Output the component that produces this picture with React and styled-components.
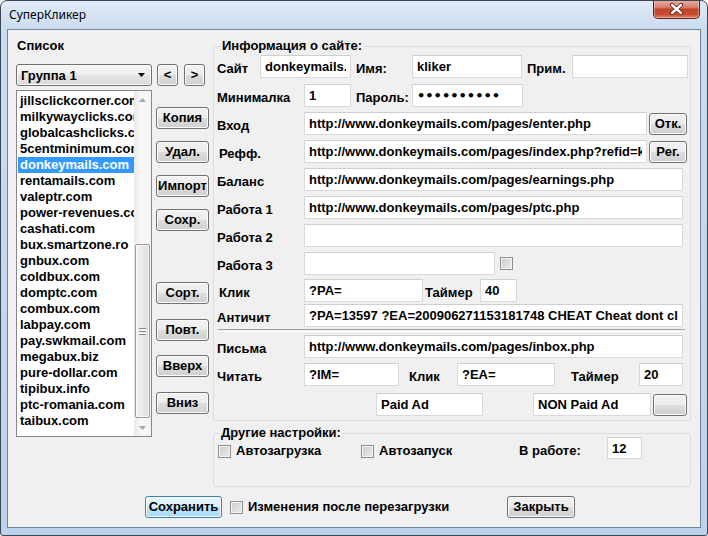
import React from 'react';
import styled, { createGlobalStyle } from 'styled-components';

// Базовые стили страницы
const GlobalStyle = createGlobalStyle`
  html, body {
    margin: 0;
    padding: 0;
    background: #ffffff;
  }
  body {
    font-family: "Liberation Sans", Arial, sans-serif;
  }
`;

const uiFont = '"Liberation Sans", Arial, sans-serif';

// Рамка окна Windows 7
const Window = styled.div`
  width: 708px;
  height: 536px;
  box-sizing: border-box;
  border: 1px solid #3c4653;
  border-radius: 7px 7px 3px 3px;
  background: linear-gradient(to bottom, #e1ebf7 0px, #cadcf0 28px, #bdd2eb 100%);
  padding: 0 6px 7px 6px;
  display: flex;
  flex-direction: column;
  overflow: hidden;
`;

const TitleBar = styled.div`
  height: 28px;
  display: flex;
  justify-content: space-between;
  align-items: flex-start;
`;

const TitleText = styled.span`
  font-family: "Noto Sans", "Open Sans", sans-serif;
  font-size: 12px;
  line-height: 16px;
  color: #000;
  padding: 6px 0 0 2px;
`;

const CloseButton = styled.div`
  width: 47px;
  height: 19px;
  margin-top: -1px;
  margin-right: 1px;
  box-sizing: border-box;
  border: 1px solid #5a2218;
  border-top: none;
  border-radius: 0 0 5px 5px;
  background: linear-gradient(to bottom, #eab1a4 0%, #d98170 40%, #c2432b 52%, #c84c33 80%, #e0866b 100%);
  display: flex;
  align-items: center;
  justify-content: center;
  box-shadow: inset 0 0 0 1px rgba(255, 255, 255, 0.35);
`;

const Client = styled.div`
  flex: 1;
  background: #f0f0f0;
  border: 1px solid #71839b;
  display: flex;
  flex-direction: column;
`;

const Top = styled.div`
  display: flex;
  height: 458px;
`;

const LeftPanel = styled.div`
  width: 193px;
  padding-left: 8px;
  display: flex;
  flex-direction: column;
`;

const SectionLabel = styled.div`
  font-family: ${uiFont};
  font-weight: bold;
  font-size: 13px;
  line-height: 16px;
  margin: 8px 0 0 1px;
  color: #000;
`;

const ComboRow = styled.div`
  display: flex;
  margin-top: 10px;
  height: 22px;
`;

const Combo = styled.div`
  width: 136px;
  height: 22px;
  box-sizing: border-box;
  border: 1px solid #707070;
  border-radius: 3px;
  background: linear-gradient(to bottom, #f6f6f6 0%, #eeeeee 50%, #e4e4e4 51%, #dadada 100%);
  box-shadow: inset 0 0 0 1px #fbfbfb;
  display: flex;
  align-items: center;
  justify-content: space-between;
  padding: 0 6px 0 4px;
  font-family: ${uiFont};
  font-weight: bold;
  font-size: 13px;
  color: #000;
`;

// Кнопка в стиле Windows 7
const Button = styled.button`
  width: ${(p) => p.$w}px;
  height: 22px;
  margin: ${(p) => p.$mt || 0}px 0 0 ${(p) => p.$ml || 0}px;
  padding: 0;
  box-sizing: border-box;
  flex-shrink: 0;
  border: 1px solid ${(p) => (p.$default ? '#3c7fb1' : '#707070')};
  border-radius: 3px;
  background: ${(p) =>
    p.$default
      ? 'linear-gradient(to bottom, #eaf6fd 0%, #d9f0fc 50%, #bee6fd 51%, #a7d9f5 100%)'
      : 'linear-gradient(to bottom, #f2f2f2 0%, #ebebeb 50%, #dddddd 51%, #cfcfcf 100%)'};
  box-shadow: inset 0 0 0 1px ${(p) => (p.$default ? '#f4fbff' : '#fcfcfc')};
  font-family: ${uiFont};
  font-weight: bold;
  font-size: 13px;
  color: #000;
  line-height: 18px;
`;

const ListRow = styled.div`
  display: flex;
  margin-top: 4px;
`;

const ListBox = styled.div`
  width: 136px;
  height: 347px;
  box-sizing: border-box;
  border: 1px solid #828790;
  background: #fff;
  display: flex;
`;

const Items = styled.div`
  width: 117px;
  padding-top: 2px;
  overflow: hidden;
`;

const Item = styled.div`
  margin-left: 1px;
  padding-left: 2px;
  height: 16px;
  line-height: 16px;
  white-space: nowrap;
  overflow: hidden;
  font-family: ${uiFont};
  font-weight: bold;
  font-size: 13px;
  color: ${(p) => (p.$selected ? '#fff' : '#000')};
  background: ${(p) => (p.$selected ? '#3399ff' : 'transparent')};
`;

const ScrollBar = styled.div`
  width: 17px;
  background: linear-gradient(to right, #eaeaea, #f7f7f7 40%, #f4f4f4);
  display: flex;
  flex-direction: column;
  align-items: center;
`;

const ScrollArrow = styled.div`
  height: 17px;
  display: flex;
  align-items: center;
  justify-content: center;
`;

const ScrollThumb = styled.div`
  width: 15px;
  height: 174px;
  margin-top: ${(p) => p.$offset}px;
  box-sizing: border-box;
  border: 1px solid #9b9b9b;
  border-radius: 2px;
  background: linear-gradient(to right, #f3f3f3 0%, #e9e9e9 50%, #d9d9d9 100%);
  box-shadow: inset 0 0 0 1px #fafafa;
  display: flex;
  align-items: center;
  justify-content: center;
`;

const Grip = styled.div`
  width: 7px;
  height: 7px;
  background: repeating-linear-gradient(to bottom, #8d8d8d 0px, #8d8d8d 1px, #f4f4f4 1px, #f4f4f4 3px);
`;

const Spring = styled.div`
  flex: 1;
`;

const ButtonColumn = styled.div`
  display: flex;
  flex-direction: column;
  margin-left: 4px;
`;

const RightPanel = styled.div`
  margin-left: 4px;
  width: 478px;
  display: flex;
  flex-direction: column;
`;

const Group = styled.fieldset`
  margin: ${(p) => p.$mt}px 0 0 0;
  padding: ${(p) => p.$pt}px 0 ${(p) => p.$pb}px ${(p) => p.$pl}px;
  width: 478px;
  box-sizing: border-box;
  min-width: 0;
  border: 1px solid #d5dfe5;
  border-radius: 3px;
`;

const Legend = styled.legend`
  font-family: ${uiFont};
  font-weight: bold;
  font-size: 13px;
  line-height: ${(p) => p.$lh}px;
  padding: 0 2px 0 1px;
  margin-left: ${(p) => p.$ml}px;
  color: #000;
`;

const Row = styled.div`
  display: flex;
  align-items: center;
  height: ${(p) => p.$h || 23}px;
  margin-top: ${(p) => p.$mt || 0}px;
`;

const Label = styled.span`
  width: ${(p) => p.$w}px;
  margin-left: ${(p) => p.$ml || 0}px;
  padding: 5px 0 0 ${(p) => p.$pl || 0}px;
  box-sizing: border-box;
  flex-shrink: 0;
  font-family: ${uiFont};
  font-weight: bold;
  font-size: 13px;
  line-height: 16px;
  white-space: nowrap;
  color: #000;
`;

const Field = styled.input`
  width: ${(p) => p.$w}px;
  height: ${(p) => p.$h || 23}px;
  margin: 0 0 0 ${(p) => p.$ml || 0}px;
  padding: 0 4px;
  box-sizing: border-box;
  flex-shrink: 0;
  border: 1px solid #d9d9d9;
  border-top-color: #cfcfcf;
  border-radius: 0;
  background: #fff;
  outline: none;
  font-family: ${(p) => (p.$dots ? '"DejaVu Sans", sans-serif' : uiFont)};
  font-weight: bold;
  font-size: 13px;
  color: #000;
`;

const Divider = styled.div`
  width: 467px;
  height: 1px;
  margin-top: 2px;
  border-top: 1px solid #a0a0a0;
  border-bottom: 1px solid #fff;
  margin-left: 1px;
`;

const CheckBox = styled.span`
  width: 13px;
  height: 13px;
  margin-left: ${(p) => p.$ml || 0}px;
  box-sizing: border-box;
  flex-shrink: 0;
  border: 1px solid #8f8f8f;
  background: linear-gradient(135deg, #c9c9c9 0%, #dedede 55%, #ececec 100%);
  box-shadow: inset 0 0 0 1px #f4f4f4;
`;

const CheckItem = styled.label`
  width: ${(p) => p.$w}px;
  margin-left: ${(p) => p.$ml || 0}px;
  display: flex;
  align-items: center;
  gap: 5px;
  flex-shrink: 0;
  align-self: ${(p) => (p.$low ? 'flex-end' : 'center')};
  height: 16px;
  font-family: ${uiFont};
  font-weight: bold;
  font-size: 13px;
  line-height: 16px;
  white-space: nowrap;
  color: #000;
`;

const BottomBar = styled.div`
  display: flex;
  align-items: center;
  height: 22px;
  margin-top: 8px;
  padding-left: 137px;
`;

const sites = [
  'jillsclickcorner.com',
  'milkywayclicks.com',
  'globalcashclicks.com',
  '5centminimum.com',
  'donkeymails.com',
  'rentamails.com',
  'valeptr.com',
  'power-revenues.com',
  'cashati.com',
  'bux.smartzone.ro',
  'gnbux.com',
  'coldbux.com',
  'domptc.com',
  'combux.com',
  'labpay.com',
  'pay.swkmail.com',
  'megabux.biz',
  'pure-dollar.com',
  'tipibux.info',
  'ptc-romania.com',
  'taibux.com',
];

const sideButtons = [
  { text: 'Копия', mt: 17 },
  { text: 'Удал.', mt: 12 },
  { text: 'Импорт', mt: 12 },
  { text: 'Сохр.', mt: 12 },
  { text: 'Сорт.', mt: 51 },
  { text: 'Повт.', mt: 15 },
  { text: 'Вверх', mt: 14 },
  { text: 'Вниз', mt: 15 },
];

const CloseGlyph = () => (
  <svg width="15" height="12" viewBox="0 0 15 12">
    <path d="M3 2 L12 10 M12 2 L3 10" stroke="#5a2218" strokeWidth="4.2" strokeLinecap="round" />
    <path d="M3 2 L12 10 M12 2 L3 10" stroke="#ffffff" strokeWidth="2.4" strokeLinecap="round" />
  </svg>
);

const Triangle = ({ down, color }) => (
  <svg width="7" height="4" viewBox="0 0 7 4">
    <path d={down ? 'M0 0 H7 L3.5 4 Z' : 'M0 4 H7 L3.5 0 Z'} fill={color} />
  </svg>
);

const App = () => {
  return (
    <>
      <GlobalStyle />
      <Window>
        <TitleBar>
          <TitleText>СуперКликер</TitleText>
          <CloseButton>
            <CloseGlyph />
          </CloseButton>
        </TitleBar>
        <Client>
          <Top>
            <LeftPanel>
              <SectionLabel>Список</SectionLabel>
              <ComboRow>
                <Combo>
                  <span>Группа 1</span>
                  <Triangle down color="#000" />
                </Combo>
                <Button $w={21} $ml={5}>&lt;</Button>
                <Button $w={21} $ml={6}>&gt;</Button>
              </ComboRow>
              <ListRow>
                <ListBox>
                  <Items>
                    {sites.map((site) => (
                      <Item key={site} $selected={site === 'donkeymails.com'}>
                        {site}
                      </Item>
                    ))}
                  </Items>
                  <ScrollBar>
                    <ScrollArrow>
                      <Triangle color="#a8a8a8" />
                    </ScrollArrow>
                    <ScrollThumb $offset={136}>
                      <Grip />
                    </ScrollThumb>
                    <Spring />
                    <ScrollArrow>
                      <Triangle down color="#a8a8a8" />
                    </ScrollArrow>
                  </ScrollBar>
                </ListBox>
                <ButtonColumn>
                  {sideButtons.map((b) => (
                    <Button key={b.text} $w={53} $mt={b.mt}>
                      {b.text}
                    </Button>
                  ))}
                </ButtonColumn>
              </ListRow>
            </LeftPanel>

            <RightPanel>
              <Group $mt={8} $pt={1} $pb={4} $pl={3}>
                <Legend $lh={16} $ml={4}>Информация о сайте:</Legend>
                <Row>
                  <Label $w={43}>Сайт</Label>
                  <Field $w={91} defaultValue="donkeymails.com" />
                  <Label $w={56} $ml={5}>Имя:</Label>
                  <Field $w={110} defaultValue="kliker" />
                  <Label $w={45} $ml={5}>Прим.</Label>
                  <Field $w={116} defaultValue="" />
                </Row>
                <Row $mt={6}>
                  <Label $w={87}>Минималка</Label>
                  <Field $w={47} defaultValue="1" />
                  <Label $w={56} $ml={5}>Пароль:</Label>
                  <Field $w={111} $dots defaultValue="••••••••••" />
                </Row>
                <Row $mt={5}>
                  <Label $w={87}>Вход</Label>
                  <Field $w={343} defaultValue="http://www.donkeymails.com/pages/enter.php" />
                  <Button $w={38} $ml={2}>Отк.</Button>
                </Row>
                <Row $mt={5}>
                  <Label $w={87} $pl={2}>Рефф.</Label>
                  <Field $w={343} defaultValue="http://www.donkeymails.com/pages/index.php?refid=kliker" />
                  <Button $w={38} $ml={2}>Рег.</Button>
                </Row>
                <Row $mt={5}>
                  <Label $w={87}>Баланс</Label>
                  <Field $w={379} defaultValue="http://www.donkeymails.com/pages/earnings.php" />
                </Row>
                <Row $mt={5}>
                  <Label $w={87}>Работа 1</Label>
                  <Field $w={379} defaultValue="http://www.donkeymails.com/pages/ptc.php" />
                </Row>
                <Row $mt={5}>
                  <Label $w={87}>Работа 2</Label>
                  <Field $w={379} defaultValue="" />
                </Row>
                <Row $mt={5}>
                  <Label $w={87}>Работа 3</Label>
                  <Field $w={191} defaultValue="" />
                  <CheckBox $ml={5} />
                </Row>
                <Row $mt={4}>
                  <Label $w={87} $pl={2}>Клик</Label>
                  <Field $w={119} defaultValue="?PA=" />
                  <Label $w={55} $ml={2}>Таймер</Label>
                  <Field $w={37} defaultValue="40" />
                </Row>
                <Row $mt={2}>
                  <Label $w={87}>Античит</Label>
                  <Field $w={379} defaultValue="?PA=13597 ?EA=200906271153181748 CHEAT Cheat dont click" />
                </Row>
                <Divider />
                <Row $mt={3}>
                  <Label $w={87}>Письма</Label>
                  <Field $w={379} defaultValue="http://www.donkeymails.com/pages/inbox.php" />
                </Row>
                <Row $mt={5}>
                  <Label $w={87}>Читать</Label>
                  <Field $w={95} defaultValue="?IM=" />
                  <Label $w={48} $ml={10}>Клик</Label>
                  <Field $w={98} defaultValue="?EA=" />
                  <Label $w={68} $ml={16}>Таймер</Label>
                  <Field $w={44} defaultValue="20" />
                </Row>
                <Row $mt={7}>
                  <Field $w={107} $ml={159} defaultValue="Paid Ad" />
                  <Field $w={118} $ml={50} defaultValue="NON Paid Ad" />
                  <Button $w={34} $ml={2} />
                </Row>
              </Group>

              <Group $mt={5} $pt={0} $pb={27} $pl={4}>
                <Legend $lh={14} $ml={2}>Другие настройки:</Legend>
                <Row $h={22} $mt={-3}>
                  <CheckItem $w={143} $low>
                    <CheckBox />
                    Автозагрузка
                  </CheckItem>
                  <CheckItem $w={158} $low>
                    <CheckBox />
                    Автозапуск
                  </CheckItem>
                  <Label $w={88}>В работе:</Label>
                  <Field $w={35} $h={22} defaultValue="12" />
                </Row>
              </Group>
            </RightPanel>
          </Top>

          <BottomBar>
            <Button $w={77} $default>Сохранить</Button>
            <CheckItem $w={277} $ml={8}>
              <CheckBox />
              Изменения после перезагрузки
            </CheckItem>
            <Button $w={68}>Закрыть</Button>
          </BottomBar>
        </Client>
      </Window>
    </>
  );
};

export default App;
